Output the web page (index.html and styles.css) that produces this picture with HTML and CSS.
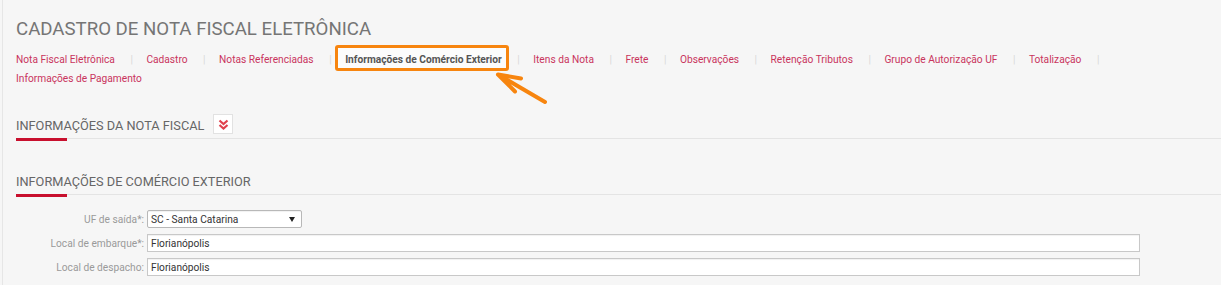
FILE: index.html
```html
<!DOCTYPE html>
<html lang="pt-BR">
<head>
    <meta charset="UTF-8">
    <meta name="viewport" content="width=device-width, initial-scale=1.0">
    <title>Cadastro de Nota Fiscal Eletrônica</title>
    <link rel="stylesheet" href="styles.css">
</head>
<body>
    <div class="page">
        <h1 class="page-title">CADASTRO DE NOTA FISCAL ELETRÔNICA</h1>

        <ul class="tabs">
            <li><a href="#">Nota Fiscal Eletrônica</a></li>
            <li><a href="#">Cadastro</a></li>
            <li><a href="#">Notas Referenciadas</a></li>
            <li class="active"><a href="#">Informações de Comércio Exterior</a></li>
            <li><a href="#">Itens da Nota</a></li>
            <li><a href="#">Frete</a></li>
            <li><a href="#">Observações</a></li>
            <li><a href="#">Retenção Tributos</a></li>
            <li><a href="#">Grupo de Autorização UF</a></li>
            <li><a href="#">Totalização</a></li>
            <li><a href="#">Informações de Pagamento</a></li>
        </ul>

        <div class="section">
            <div class="section-head">
                <h2>INFORMAÇÕES DA NOTA FISCAL</h2>
                <button type="button" class="toggle" title="Expandir">
                    <svg width="11" height="11" viewBox="0 0 11 11">
                        <path d="M1.5 1.5 L5.5 5 L9.5 1.5 M1.5 6 L5.5 9.5 L9.5 6" fill="none" stroke="#e0404c" stroke-width="2.2"/>
                    </svg>
                </button>
            </div>
        </div>

        <div class="section section-second">
            <div class="section-head">
                <h2>INFORMAÇÕES DE COMÉRCIO EXTERIOR</h2>
            </div>

            <form class="fields">
                <label for="uf-saida">UF de saída*:</label>
                <span class="select-wrap">
                    <select id="uf-saida" name="uf-saida">
                        <option value="SC">SC - Santa Catarina</option>
                    </select>
                </span>

                <label for="local-embarque">Local de embarque*:</label>
                <input type="text" id="local-embarque" name="local-embarque" value="Florianópolis">

                <label for="local-despacho">Local de despacho:</label>
                <input type="text" id="local-despacho" name="local-despacho" value="Florianópolis">
            </form>
        </div>
    </div>

    <!-- seta de destaque da aba -->
    <svg class="callout-arrow" width="62" height="40" viewBox="0 0 62 40">
        <path d="M55 32 L8 4.5 M8 4.5 L31 8.5 M8 4.5 L25 21.5" fill="none" stroke="#f7850f" stroke-width="4" stroke-linecap="round" stroke-linejoin="round"/>
    </svg>
</body>
</html>
```

FILE: styles.css
```css
body {
    margin: 0;
    background-color: #f6f6f6;
    font-family: Roboto, "Liberation Sans", Arial, sans-serif;
    position: relative;
}
.page {
    margin-left: 2px;
    border-left: 1px solid #e6e6e6;
    padding: 17px 0 0 13px;
    min-height: 100vh;
    box-sizing: border-box;
}
.page-title {
    margin: 0 0 9px;
    font-size: 18.65px;
    line-height: 24px;
    font-weight: 400;
    color: #757575;
}
.tabs {
    list-style: none;
    margin: 0;
    padding: 0;
    display: flex;
    flex-wrap: wrap;
    font-size: 10.2px;
    line-height: 19px;
}
.tabs li::after {
    content: "|";
    color: #d8d8d8;
    margin: 0 13.5px 0 15.5px;
}
.tabs li:last-child::after {
    content: none;
}
.tabs a {
    color: #c9345d;
    text-decoration: none;
}
.tabs .active {
    position: relative;
    z-index: 0;
}
.tabs .active a {
    position: relative;
    color: #555;
    font-weight: 700;
}
.tabs .active a::before {
    content: "";
    position: absolute;
    left: -10px;
    right: -7px;
    top: -9.5px;
    bottom: -6px;
    border: 3px solid #f7850f;
    border-radius: 3px;
    background-color: #fcfcfc;
    z-index: -1;
}
.section {
    margin-top: 26px;
}
.section-second {
    margin-top: 32px;
}
.section-head {
    position: relative;
    display: flex;
    align-items: center;
    gap: 9px;
    min-height: 19px;
    padding-bottom: 4px;
    border-bottom: 1px solid #e4e4e4;
}
.section-head::after {
    content: "";
    position: absolute;
    left: 0;
    bottom: -3px;
    width: 51px;
    height: 3px;
    background-color: #c8102e;
}
.section-head h2 {
    margin: 0;
    padding-top: 3px;
    font-size: 12.75px;
    line-height: 16px;
    font-weight: 400;
    color: #666;
}
.toggle {
    width: 20px;
    height: 20px;
    padding: 0;
    display: flex;
    align-items: center;
    justify-content: center;
    background-color: #fff;
    border: 1px solid #e2e2e2;
    cursor: pointer;
}
.fields {
    display: grid;
    grid-template-columns: 128px auto;
    column-gap: 3px;
    row-gap: 6px;
    margin-top: 15px;
    align-items: center;
    justify-items: start;
    font-size: 10.2px;
}
.fields label {
    justify-self: end;
    color: #9a9a9a;
}
.fields input,
.fields select {
    height: 18px;
    box-sizing: border-box;
    border: 1px solid #c8c8c8;
    padding: 0 3px;
    font: inherit;
    color: #333;
    background-color: #fff;
    box-shadow: inset 0 1px 1px rgba(0, 0, 0, 0.06);
}
.fields input {
    width: 993px;
}
.select-wrap {
    position: relative;
    display: block;
}
.fields select {
    width: 155px;
    appearance: none;
    -webkit-appearance: none;
    border-color: #b8b8b8;
    border-radius: 2px;
    outline: none;
}
.select-wrap::after {
    content: "";
    position: absolute;
    right: 7px;
    top: 7px;
    border-left: 3px solid transparent;
    border-right: 3px solid transparent;
    border-top: 5px solid #222;
    pointer-events: none;
}
.callout-arrow {
    position: absolute;
    left: 490px;
    top: 70px;
}
```
